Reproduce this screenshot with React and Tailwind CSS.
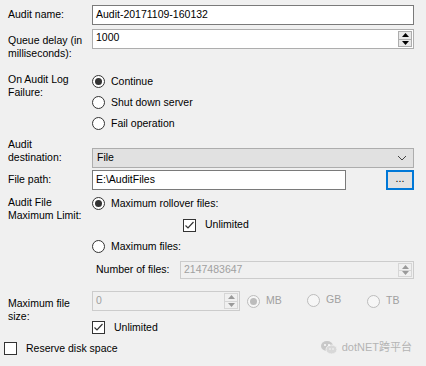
import React from "react";

// Classic Windows-style "Audit properties" form
const Radio = ({ checked, disabled, label, className = "" }) => (
  <div className={`flex items-center h-[21px] ${className}`}>
    <span
      className={`w-[13px] h-[13px] rounded-full border flex items-center justify-center shrink-0 ${
        disabled ? "border-[#bcbcbc] bg-[#f6f6f6]" : "border-[#333333] bg-white"
      }`}
    >
      {checked && (
        <span
          className={`w-[7px] h-[7px] rounded-full ${
            disabled ? "bg-[#bcbcbc]" : "bg-[#333333]"
          }`}
        />
      )}
    </span>
    <span className={`ml-[6px] ${disabled ? "text-[#a0a0a0]" : "text-black"}`}>
      {label}
    </span>
  </div>
);

const Checkbox = ({ checked, label, className = "" }) => (
  <div className={`flex items-center ${className}`}>
    <span className="w-[13px] h-[13px] border border-[#333333] bg-white flex items-center justify-center shrink-0">
      {checked && (
        <svg width="11" height="11" viewBox="0 0 11 11">
          <path d="M1.5 5.5 L4 8 L9.5 2" fill="none" stroke="#333" strokeWidth="1.2" />
        </svg>
      )}
    </span>
    <span className="ml-[9px]">{label}</span>
  </div>
);

const Spin = ({ disabled }) => {
  const arrow = disabled ? "#9a9a9a" : "#000";
  return (
    <div className="flex flex-col w-[15px] h-full py-[1px] pr-[1px]">
      <div
        className={`flex-1 flex items-center justify-center border ${
          disabled ? "border-[#d6d6d6] bg-[#f0f0f0]" : "border-[#adadad] bg-[#e8e8e8]"
        }`}
      >
        <svg width="7" height="4" viewBox="0 0 7 4">
          <path d="M0 4 L3.5 0 L7 4 Z" fill={arrow} />
        </svg>
      </div>
      <div
        className={`flex-1 flex items-center justify-center border border-t-0 ${
          disabled ? "border-[#d6d6d6] bg-[#f0f0f0]" : "border-[#adadad] bg-[#e8e8e8]"
        }`}
      >
        <svg width="7" height="4" viewBox="0 0 7 4">
          <path d="M0 0 L7 0 L3.5 4 Z" fill={arrow} />
        </svg>
      </div>
    </div>
  );
};

const App = () => {
  return (
    <div className="relative w-[426px] h-[366px] bg-[#f0f0f0] overflow-hidden font-['Liberation_Sans',Arial,sans-serif] text-[10.5px] text-black pl-[8px] pr-[12px]">
      {/* Audit name */}
      <div className="flex mt-[5px] h-[20px]">
        <div className="w-[84px] self-center">Audit name:</div>
        <div className="flex-1 h-[20px] border border-[#7a7a7a] bg-white flex items-center px-[3px]">
          Audit-20171109-160132
        </div>
      </div>

      {/* Queue delay */}
      <div className="flex mt-[4px]">
        <div className="w-[84px] pt-[5px] leading-[13px]">
          Queue delay (in
          <br />
          milliseconds):
        </div>
        <div className="flex-1 h-[20px] border border-[#adadad] bg-white flex items-center justify-between pl-[3px]">
          <span className="pb-[3px]">1000</span>
          <Spin />
        </div>
      </div>

      {/* On audit log failure */}
      <div className="flex mt-[11px]">
        <div className="w-[84px] pt-[2px] leading-[13px]">
          On Audit Log
          <br />
          Failure:
        </div>
        <div className="flex flex-col">
          <Radio checked label="Continue" />
          <Radio label="Shut down server" />
          <Radio label="Fail operation" />
        </div>
      </div>

      {/* Audit destination */}
      <div className="flex mt-[4px]">
        <div className="w-[84px] leading-[13px]">
          Audit
          <br />
          destination:
        </div>
        <div className="flex-1 mt-[10px] h-[20px] border border-[#adadad] bg-[#e1e1e1] flex items-center justify-between pl-[4px] pr-[6px]">
          <span>File</span>
          <svg width="10" height="6" viewBox="0 0 10 6">
            <path d="M1 1 L5 5 L9 1" fill="none" stroke="#444" strokeWidth="1" />
          </svg>
        </div>
      </div>

      {/* File path */}
      <div className="flex mt-[2px] h-[20px]">
        <div className="w-[84px] self-center">File path:</div>
        <div className="w-[254px] h-[20px] border border-[#7a7a7a] bg-white flex items-center px-[3px]">
          E:\AuditFiles
        </div>
        <div className="ml-auto w-[28px] h-[20px] border-2 border-[#0078d7] bg-[#e1e1e1] flex items-center justify-center pb-[3px]">
          ...
        </div>
      </div>

      {/* Maximum limit */}
      <div className="flex mt-[3px]">
        <div className="w-[84px] pt-[3px] leading-[13px]">
          Audit File
          <br />
          Maximum Limit:
        </div>
        <div className="flex-1 flex flex-col">
          <Radio checked label="Maximum rollover files:" className="h-[20px]" />
          <Checkbox checked label="Unlimited" className="h-[22px] ml-[91px]" />
          <Radio label="Maximum files:" className="h-[20px]" />
          <div className="flex mt-[4px] h-[18px]">
            <div className="w-[88px] pl-[4px] self-center">Number of files:</div>
            <div className="flex-1 h-[18px] border border-[#cccccc] flex items-center justify-between pl-[3px] text-[#a0a0a0]">
              <span>2147483647</span>
              <Spin disabled />
            </div>
          </div>
        </div>
      </div>

      {/* Maximum file size */}
      <div className="flex mt-[12px]">
        <div className="w-[84px] pt-[6px] leading-[13px]">
          Maximum file
          <br />
          size:
        </div>
        <div className="flex-1 flex flex-col">
          <div className="flex items-center h-[20px]">
            <div className="w-[148px] h-[20px] border border-[#cccccc] flex items-center justify-between pl-[3px] text-[#a0a0a0]">
              <span>0</span>
              <Spin disabled />
            </div>
            <Radio checked disabled label="MB" className="ml-[7px] w-[60px]" />
            <Radio disabled label="GB" className="w-[60px] -mt-[2px]" />
            <Radio disabled label="TB" />
          </div>
          <Checkbox checked label="Unlimited" className="mt-[10px] h-[13px]" />
        </div>
      </div>

      {/* Reserve disk space */}
      <Checkbox label="Reserve disk space" className="mt-[8px] h-[13px] -ml-[4px]" />

      {/* watermark */}
      <div className="absolute right-[14px] top-[339px] flex items-center gap-[4px] text-[#b4b4b4] text-[11px] font-['Liberation_Sans','Noto_Sans_CJK_SC',sans-serif]">
        <svg width="18" height="15" viewBox="0 0 18 15">
          <ellipse cx="7" cy="6" rx="6" ry="5" fill="#c8c8c8" />
          <ellipse cx="11.5" cy="9.5" rx="5.5" ry="4.5" fill="#d8d8d8" stroke="#f0f0f0" strokeWidth="1" />
          <circle cx="5" cy="5" r="0.9" fill="#fff" />
          <circle cx="9" cy="5" r="0.9" fill="#fff" />
          <circle cx="10" cy="9" r="0.7" fill="#fff" />
          <circle cx="13" cy="9" r="0.7" fill="#fff" />
        </svg>
        <span>dotNET跨平台</span>
      </div>
    </div>
  );
};

export default App;
